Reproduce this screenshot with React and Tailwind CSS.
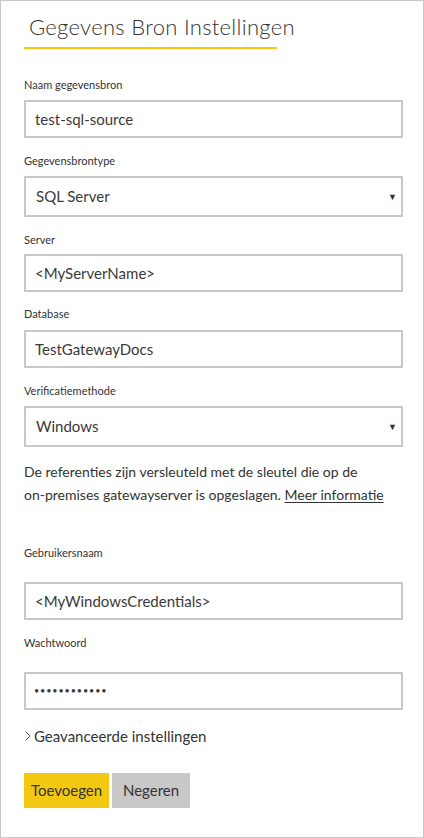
const font = { fontFamily: 'Lato, "Open Sans", sans-serif' };

function Label({ children, className = '' }) {
  return <div className={`text-[11px] leading-4 text-[#333] ${className}`}>{children}</div>;
}

function TextBox({ value, className = '' }) {
  return (
    <div className={`mt-[7px] h-[38px] border-2 border-[#c8c8c8] flex items-center pl-[9px] text-[15px] text-[#3a3a3a] ${className}`}>
      {value}
    </div>
  );
}

function SelectBox({ value }) {
  return (
    <div className="mt-[7px] h-[41px] border-2 border-[#c8c8c8] flex items-center justify-between pl-[10px] pr-[4px] text-[15px] text-[#3a3a3a]">
      <span>{value}</span>
      <span className="text-[9px] text-[#333]">▼</span>
    </div>
  );
}

export default function App() {
  return (
    <div style={font} className="w-[424px] h-[838px] bg-white border border-[#c8c8c8] text-[#333]">
      <div className="pl-[23px] pr-[20px]">
        <div className="w-[253px] h-[48px] border-b-2 border-[#f2c811] pl-[5px] pt-[12px] text-[22px] leading-7 font-light whitespace-nowrap text-[#333] tracking-[0.3px]">
          Gegevens Bron Instellingen
        </div>

        <Label className="mt-[28px]">Naam gegevensbron</Label>
        <TextBox value="test-sql-source" />

        <Label className="mt-[15px]">Gegevensbrontype</Label>
        <SelectBox value="SQL Server" />

        <Label className="mt-[15px]">Server</Label>
        <TextBox value="<MyServerName>" className="!mt-[6px]" />

        <Label className="mt-[14px]">Database</Label>
        <TextBox value="TestGatewayDocs" className="!mt-[8px]" />

        <Label className="mt-[15px]">Verificatiemethode</Label>
        <SelectBox value="Windows" />

        <p className="mt-[13px] text-[14px] leading-[23px] text-[#333]">
          De referenties zijn versleuteld met de sleutel die op de
          <br />
          on-premises gatewayserver is opgeslagen.{' '}
          <span className="underline underline-offset-2">Meer informatie</span>
        </p>

        <Label className="mt-[39px]">Gebruikersnaam</Label>
        <TextBox value="<MyWindowsCredentials>" className="!mt-[21px]" />

        <Label className="mt-[15px]">Wachtwoord</Label>
        <TextBox value="••••••••••••" className="!mt-[21px] !text-[9px] tracking-[0.9px] !pl-[8px]" />

        <div className="mt-[16px] flex items-center text-[15px] leading-5 text-[#333]">
          <svg width="8" height="12" viewBox="0 0 8 12" className="mr-[2px]" fill="none" stroke="#555" strokeWidth="1">
            <polyline points="1.5,1.5 6,6 1.5,10.5" />
          </svg>
          <span>Geavanceerde instellingen</span>
        </div>

        <div className="mt-[27px] flex gap-[3px]">
          <button className="w-[85px] h-[35px] bg-[#f2c811] text-[15px] text-[#333]">Toevoegen</button>
          <button className="w-[78px] h-[35px] bg-[#c8c8c8] text-[15px] text-[#333]">Negeren</button>
        </div>
      </div>
    </div>
  );
}
